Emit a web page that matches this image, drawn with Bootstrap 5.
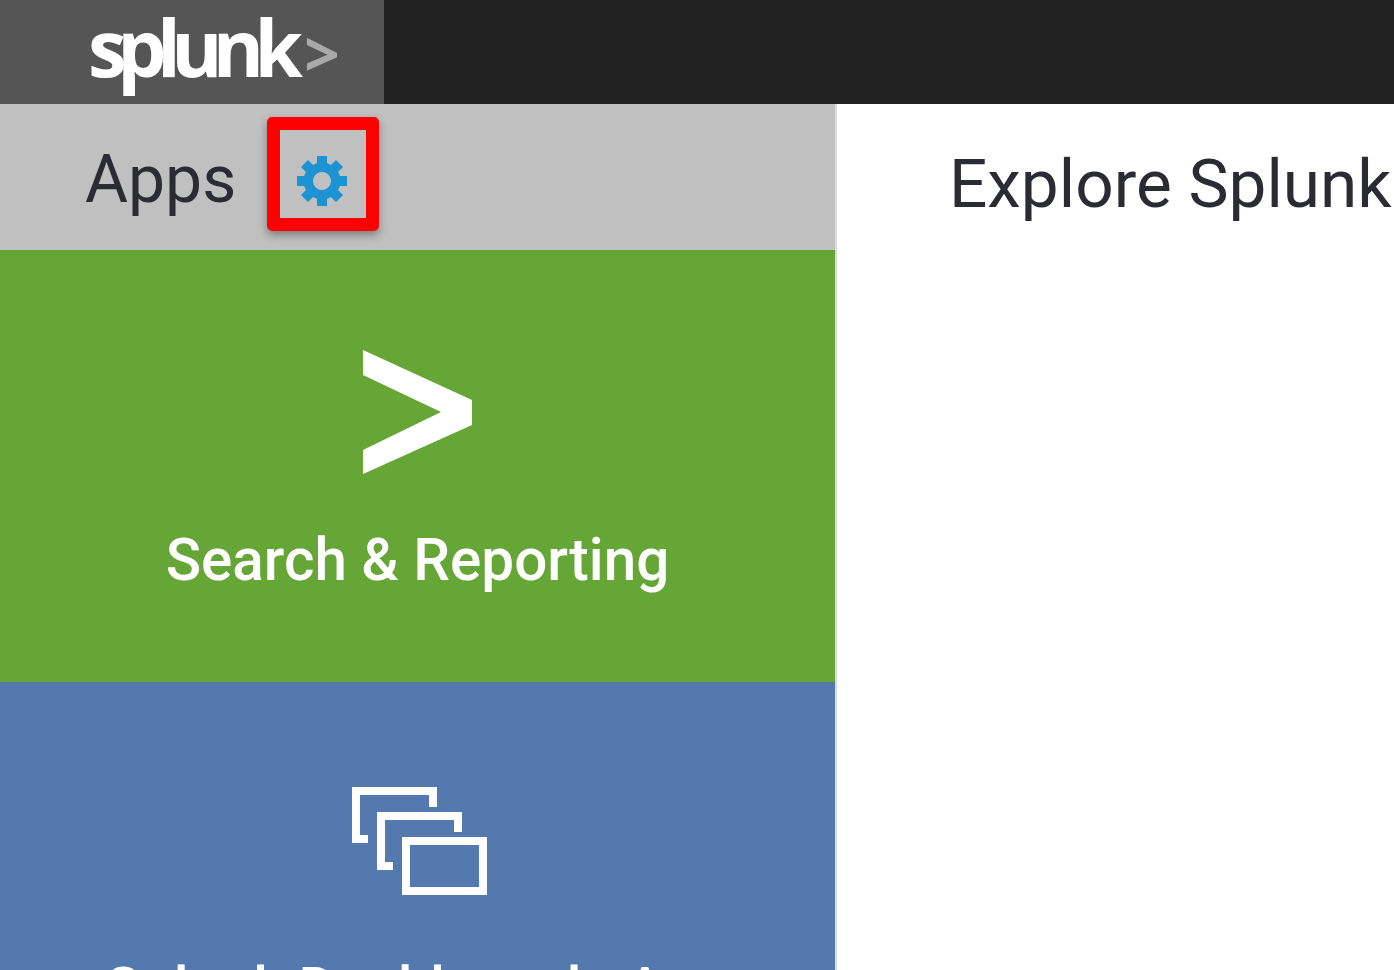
<!DOCTYPE html>
<html lang="en">
<head>
<meta charset="utf-8">
<title>Splunk</title>
<link href="https://cdn.jsdelivr.net/npm/bootstrap@5.3.0/dist/css/bootstrap.min.css" rel="stylesheet">
<style>
html,body{height:100%;overflow:hidden;background:#fff}
body{font-family:Roboto,"Liberation Sans",sans-serif}
.topbar{height:104px;background:#212121}
.logo-block{width:384px;background:#555;padding-left:88px;line-height:1}
.logo-text{font-family:"Open Sans","Noto Sans",sans-serif;font-weight:700;font-size:78px;letter-spacing:-9.6px;color:#fff;line-height:94px}
.logo-chev{color:#a9a9a9;font-weight:700;font-size:62px;letter-spacing:0;margin-left:11px}
.main-wrap{height:866px}
.side-col{width:837px;flex:none;border-right:2px solid #dcdcdc}
.apps-head{height:146px;flex:none;background:#c0c0c0;padding-left:85px;color:#2b2b33;font-size:66px}
.apps-title{line-height:1;margin-top:43px}
.red-box{width:112px;height:114px;margin-left:31px;margin-top:13px;padding:13px 3px 0 0;border:13px solid #f00;border-radius:5px;box-shadow:0 4px 8px rgba(0,0,0,.35)}
.tile{overflow:hidden;color:#fff;flex:none}
.tile svg{flex:none}
.tile-green{height:432px;background:#65a637;padding-top:100px}
.tile-blue{height:288px;background:#5379af;padding-top:103px}
.tile-blue svg{margin-left:4px}
.tile-label{font-size:58.4px;font-weight:500;line-height:1;white-space:nowrap}
.tile-green .tile-label{margin-top:56px}
.tile-blue .tile-label{margin-top:63px}
.explore{font-size:67.5px;line-height:1;color:#2b2b33;padding:46px 0 0 112px;white-space:nowrap}
</style>
</head>
<body>
<header class="topbar d-flex">
  <div class="logo-block"><span class="logo-text">splunk<span class="logo-chev">&gt;</span></span></div>
</header>
<div class="main-wrap d-flex">
  <aside class="side-col d-flex flex-column">
    <div class="apps-head d-flex align-items-start">
      <span class="apps-title">Apps</span>
      <span class="red-box d-flex align-items-center justify-content-center">
        <svg width="50" height="50" viewBox="0 0 50 50" role="img" aria-label="Settings">
          <path fill="#1e93d3" fill-rule="evenodd" d="M20 0h10v7l4 2 5-5 7 7-5 5 2 4h7v10h-7l-2 4 5 5-7 7-5-5-4 2v7H20v-7l-4-2-5 5-7-7 5-5-2-4H0V20h7l2-4-5-5 7-7 5 5 4-2zM25 16a9 9 0 1 0 .01 0z"/>
        </svg>
      </span>
    </div>
    <a class="tile tile-green d-flex flex-column align-items-center text-decoration-none" href="#">
      <svg width="110" height="125" viewBox="0 0 110 125" role="img" aria-label="Search">
        <path fill="#fff" d="M0 0L109 50V75L0 124V100L78 62L0 25Z"/>
      </svg>
      <span class="tile-label">Search &amp; Reporting</span>
    </a>
    <a class="tile tile-blue d-flex flex-column align-items-center text-decoration-none" href="#">
      <svg width="140" height="112" viewBox="0 0 140 112" role="img" aria-label="Windows">
        <g fill="none" stroke="#fff" stroke-width="8">
          <path d="M83 22V6H6V54H18"/>
          <path d="M108 47V31H31V81H43"/>
          <rect x="56" y="56" width="77" height="50"/>
        </g>
      </svg>
      <span class="tile-label">Splunk Dashboards App</span>
    </a>
  </aside>
  <main class="explore flex-grow-1 overflow-hidden">Explore Splunk</main>
</div>
<script src="https://cdn.jsdelivr.net/npm/bootstrap@5.3.0/dist/js/bootstrap.bundle.min.js"></script>
</body>
</html>
